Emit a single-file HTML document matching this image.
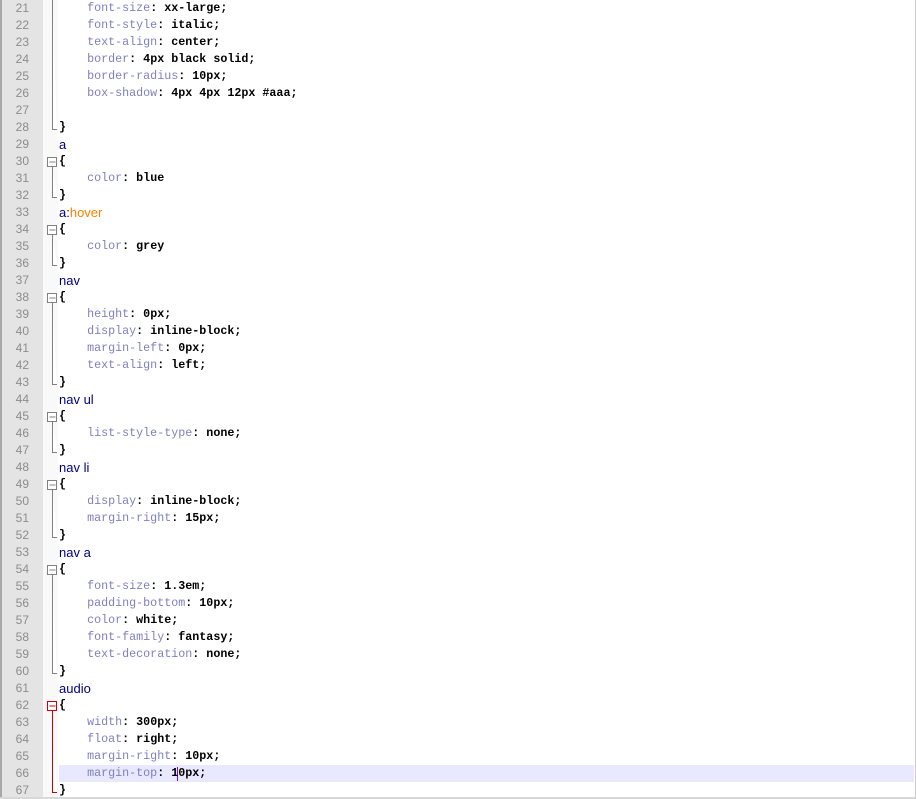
<!DOCTYPE html>
<html><head><meta charset="utf-8"><style>
body{margin:0;width:916px;height:799px;background:#fff;overflow:hidden;position:relative}
.g{position:absolute;left:0;top:0;width:43px;height:797px;background:#e4e4e4;border-left:2px solid #a8a8a8;box-sizing:border-box}
.f{position:absolute;left:43px;top:0;width:15px;height:797px;background:#f9f9f9}
.n{position:absolute;left:0;width:29px;text-align:right;font:12px/17px "Liberation Sans",sans-serif;color:#8c8c8c}
.t{position:absolute;left:59px;white-space:pre;font:11.7px/17px "Liberation Mono",monospace;color:#000;font-weight:bold}
.p{color:#8080c0;font-weight:normal}
.s{font:13px/17px "Liberation Sans",sans-serif;color:#000080;font-weight:normal}
.h{color:#ff8000}
.hl{position:absolute;left:59px;top:765px;width:855px;height:17px;background:#e8e8ff}
.bot{position:absolute;left:0;top:797px;width:916px;height:2px;background:#d8d8d8}
.r{position:absolute;right:0;top:0;width:1px;height:799px;background:#ccc}
.cur{position:absolute;left:177px;top:767px;width:1px;height:14px;background:#8000ff}
</style></head><body>
<div class="g"></div><div class="f"></div><div class="hl"></div><div class="cur"></div><div class="bot"></div><div class="r"></div>
<svg style="position:absolute;left:0;top:0" width="60" height="799">
<g stroke="#808080" fill="#fff" stroke-width="1">
<path d="M52.5 0V129.5H57"/>
<path d="M52.5 167V197.5H57"/><rect x="47.5" y="157.5" width="9" height="9"/>
<path d="M52.5 235V265.5H57"/><rect x="47.5" y="225.5" width="9" height="9"/>
<path d="M52.5 303V384.5H57"/><rect x="47.5" y="293.5" width="9" height="9"/>
<path d="M52.5 422V452.5H57"/><rect x="47.5" y="412.5" width="9" height="9"/>
<path d="M52.5 490V537.5H57"/><rect x="47.5" y="480.5" width="9" height="9"/>
<path d="M52.5 575V673.5H57"/><rect x="47.5" y="565.5" width="9" height="9"/>
</g>
<g stroke="#808080" stroke-width="1"><path d="M49.5 162h6M49.5 230h6M49.5 298h6M49.5 417h6M49.5 485h6M49.5 570h6"/></g>
<g stroke="#d00000" fill="#fff" stroke-width="1">
<path d="M52.5 711V792.5H57"/><rect x="47.5" y="701.5" width="9" height="9"/><path d="M49.5 706h6"/>
</g>
</svg>
<div class="n" style="top:0">21</div><div class="n" style="top:17px">22</div><div class="n" style="top:34px">23</div><div class="n" style="top:51px">24</div><div class="n" style="top:68px">25</div><div class="n" style="top:85px">26</div><div class="n" style="top:102px">27</div><div class="n" style="top:119px">28</div><div class="n" style="top:136px">29</div><div class="n" style="top:153px">30</div><div class="n" style="top:170px">31</div><div class="n" style="top:187px">32</div><div class="n" style="top:204px">33</div><div class="n" style="top:221px">34</div><div class="n" style="top:238px">35</div><div class="n" style="top:255px">36</div><div class="n" style="top:272px">37</div><div class="n" style="top:289px">38</div><div class="n" style="top:306px">39</div><div class="n" style="top:323px">40</div><div class="n" style="top:340px">41</div><div class="n" style="top:357px">42</div><div class="n" style="top:374px">43</div><div class="n" style="top:391px">44</div><div class="n" style="top:408px">45</div><div class="n" style="top:425px">46</div><div class="n" style="top:442px">47</div><div class="n" style="top:459px">48</div><div class="n" style="top:476px">49</div><div class="n" style="top:493px">50</div><div class="n" style="top:510px">51</div><div class="n" style="top:527px">52</div><div class="n" style="top:544px">53</div><div class="n" style="top:561px">54</div><div class="n" style="top:578px">55</div><div class="n" style="top:595px">56</div><div class="n" style="top:612px">57</div><div class="n" style="top:629px">58</div><div class="n" style="top:646px">59</div><div class="n" style="top:663px">60</div><div class="n" style="top:680px">61</div><div class="n" style="top:697px">62</div><div class="n" style="top:714px">63</div><div class="n" style="top:731px">64</div><div class="n" style="top:748px">65</div><div class="n" style="top:765px">66</div><div class="n" style="top:782px">67</div>
<div class="t" style="top:0">    <span class="p">font-size</span>: xx-large;</div>
<div class="t" style="top:17px">    <span class="p">font-style</span>: italic;</div>
<div class="t" style="top:34px">    <span class="p">text-align</span>: center;</div>
<div class="t" style="top:51px">    <span class="p">border</span>: 4px black solid;</div>
<div class="t" style="top:68px">    <span class="p">border-radius</span>: 10px;</div>
<div class="t" style="top:85px">    <span class="p">box-shadow</span>: 4px 4px 12px #aaa;</div>
<div class="t" style="top:119px">}</div>
<div class="t" style="top:136px"><span class="s">a</span></div>
<div class="t" style="top:153px">{</div>
<div class="t" style="top:170px">    <span class="p">color</span>: blue</div>
<div class="t" style="top:187px">}</div>
<div class="t" style="top:204px"><span class="s">a:<span class="h">hover</span></span></div>
<div class="t" style="top:221px">{</div>
<div class="t" style="top:238px">    <span class="p">color</span>: grey</div>
<div class="t" style="top:255px">}</div>
<div class="t" style="top:272px"><span class="s">nav</span></div>
<div class="t" style="top:289px">{</div>
<div class="t" style="top:306px">    <span class="p">height</span>: 0px;</div>
<div class="t" style="top:323px">    <span class="p">display</span>: inline-block;</div>
<div class="t" style="top:340px">    <span class="p">margin-left</span>: 0px;</div>
<div class="t" style="top:357px">    <span class="p">text-align</span>: left;</div>
<div class="t" style="top:374px">}</div>
<div class="t" style="top:391px"><span class="s">nav ul</span></div>
<div class="t" style="top:408px">{</div>
<div class="t" style="top:425px">    <span class="p">list-style-type</span>: none;</div>
<div class="t" style="top:442px">}</div>
<div class="t" style="top:459px"><span class="s">nav li</span></div>
<div class="t" style="top:476px">{</div>
<div class="t" style="top:493px">    <span class="p">display</span>: inline-block;</div>
<div class="t" style="top:510px">    <span class="p">margin-right</span>: 15px;</div>
<div class="t" style="top:527px">}</div>
<div class="t" style="top:544px"><span class="s">nav a</span></div>
<div class="t" style="top:561px">{</div>
<div class="t" style="top:578px">    <span class="p">font-size</span>: 1.3em;</div>
<div class="t" style="top:595px">    <span class="p">padding-bottom</span>: 10px;</div>
<div class="t" style="top:612px">    <span class="p">color</span>: white;</div>
<div class="t" style="top:629px">    <span class="p">font-family</span>: fantasy;</div>
<div class="t" style="top:646px">    <span class="p">text-decoration</span>: none;</div>
<div class="t" style="top:663px">}</div>
<div class="t" style="top:680px"><span class="s">audio</span></div>
<div class="t" style="top:697px">{</div>
<div class="t" style="top:714px">    <span class="p">width</span>: 300px;</div>
<div class="t" style="top:731px">    <span class="p">float</span>: right;</div>
<div class="t" style="top:748px">    <span class="p">margin-right</span>: 10px;</div>
<div class="t" style="top:765px">    <span class="p">margin-top</span>: 10px;</div>
<div class="t" style="top:782px">}</div>
</body></html>
